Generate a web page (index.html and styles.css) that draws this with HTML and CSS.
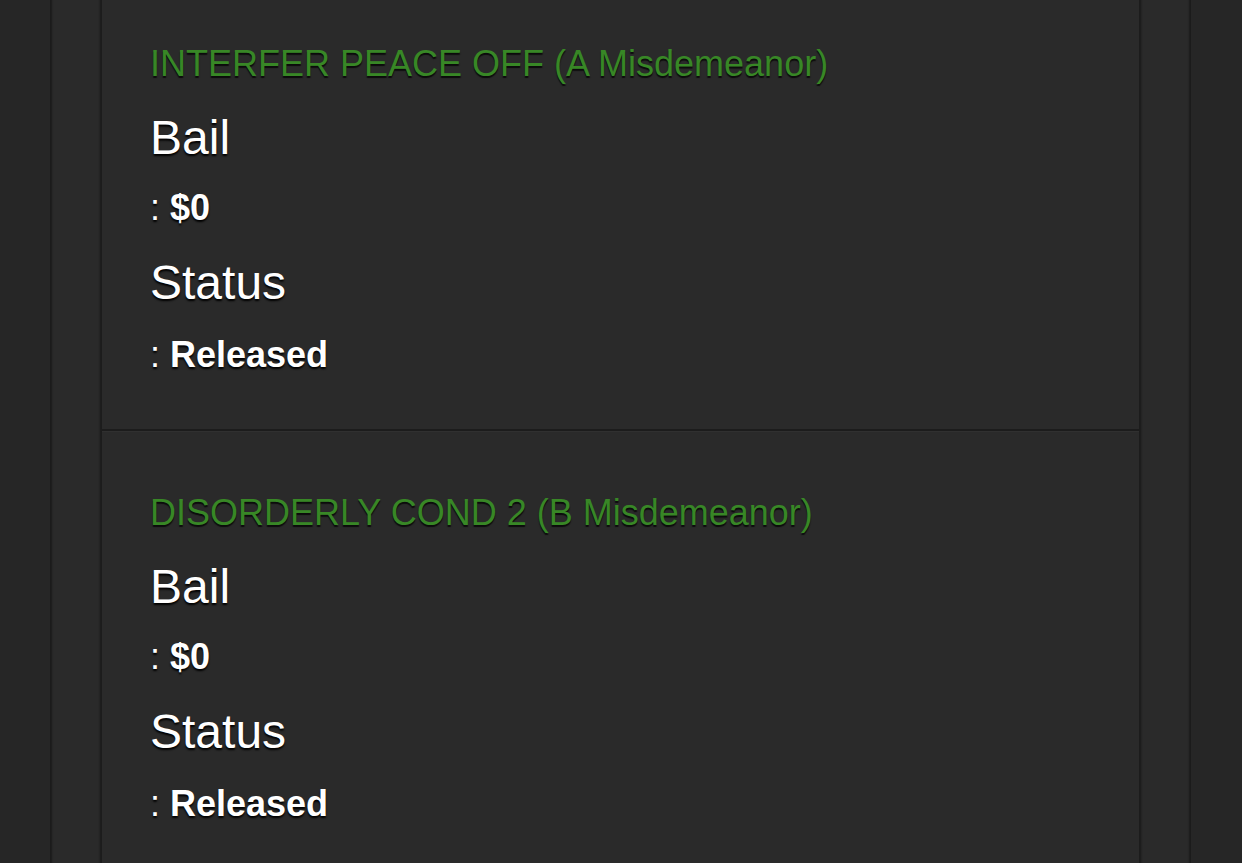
FILE: index.html
```html
<!DOCTYPE html>
<html lang="en">
<head>
<meta charset="utf-8">
<title>Charges</title>
<link rel="stylesheet" href="styles.css">
</head>
<body>
<div class="page">
  <ul class="charges">
    <li class="charge">
      <h3 class="charge-title">INTERFER PEACE OFF (A Misdemeanor)</h3>
      <h2 class="label">Bail</h2>
      <p class="value">: <strong>$0</strong></p>
      <h2 class="label">Status</h2>
      <p class="value value-last">: <strong>Released</strong></p>
    </li>
    <li class="charge">
      <h3 class="charge-title">DISORDERLY COND 2 (B Misdemeanor)</h3>
      <h2 class="label">Bail</h2>
      <p class="value">: <strong>$0</strong></p>
      <h2 class="label">Status</h2>
      <p class="value value-last">: <strong>Released</strong></p>
    </li>
  </ul>
</div>
</body>
</html>
```

FILE: styles.css
```css
html, body {
  margin: 0;
  padding: 0;
  height: 100%;
  overflow: hidden;
}
body {
  background: #262626;
  font-family: "Liberation Sans", Arial, Helvetica, sans-serif;
  color: #fff;
}
.page {
  margin: 0 51px 0 50px;
  min-height: 100%;
  padding: 0 50px;
  background: #2a2a2a;
  border-left: 1px solid #1b1b1b;
  border-right: 1px solid #1b1b1b;
  box-shadow: inset 1px 0 2px rgba(0,0,0,0.35), inset -1px 0 2px rgba(0,0,0,0.35);
}
.charges {
  list-style: none;
  margin: -20px 0 0;
  padding: 0;
  background: #2a2a2a;
  border-left: 1px solid #1c1c1c;
  border-right: 1px solid #1c1c1c;
  box-shadow: -1px 0 2px rgba(0,0,0,0.4), 1px 0 2px rgba(0,0,0,0.4);
}
.charge {
  padding: 60px 48px 53px;
  border-top: 2px solid #1c1c1c;
  box-shadow: inset 0 1px 0 #303030;
}
.charge:first-child {
  border-top: 2px solid #2a2a2a;
}
.charge-title {
  margin: 0;
  font-size: 36px;
  line-height: 44px;
  font-weight: normal;
  color: #388726;
  text-shadow: 0 2px 1px #0c0c0c;
}
.label {
  margin: 24px 0 0;
  font-size: 48px;
  line-height: 56px;
  font-weight: normal;
  color: #fff;
  text-shadow: 0 2px 2px #000;
}
.value {
  margin: 21px 0 0;
  font-size: 36px;
  line-height: 42px;
  color: #fff;
  text-shadow: 0 2px 2px #000;
}
.value-last {
  margin-top: 23px;
}
.value strong {
  font-weight: bold;
}
.label + .value + .label {
  margin-top: 26px;
}
```
